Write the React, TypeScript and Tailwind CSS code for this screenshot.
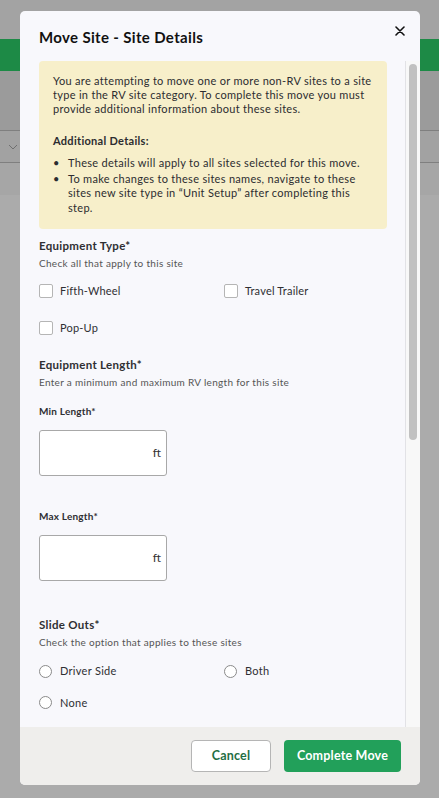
import React from "react";

const font = { fontFamily: "Lato, 'Noto Sans', sans-serif" };

function Checkbox({ label }: { label: string }) {
  return (
    <label className="flex items-center gap-[7px] text-[11px] tracking-[0.2px] text-[#2f2f33]">
      <span className="w-[14px] h-[14px] border border-[#b5b5b5] rounded-[2px] bg-white shrink-0" />
      {label}
    </label>
  );
}

function Radio({ label }: { label: string }) {
  return (
    <label className="flex items-center gap-[8px] text-[11px] tracking-[0.3px] text-[#2f2f33]">
      <span className="w-[13px] h-[13px] border border-[#8a8a8a] rounded-full bg-white shrink-0" />
      {label}
    </label>
  );
}

function LengthInput({ label }: { label: string }) {
  return (
    <div className="flex flex-col">
      <div className="text-[10px] font-bold tracking-[0.2px] text-[#2f2f33] h-[14px] leading-[14px]">{label}</div>
      <div className="mt-[12px] w-[128px] h-[46px] border border-[#a8a8a8] rounded-[3px] bg-white flex items-center justify-end pr-[5px] text-[12px] text-[#333]">
        ft
      </div>
    </div>
  );
}

export default function App() {
  return (
    <div className="relative w-[439px] h-[798px] overflow-hidden bg-[#ababab]" style={font}>
      {/* background page */}
      <div className="flex flex-col">
        <div className="h-[39px] bg-[#a3a3a3]" />
        <div className="h-[32px] bg-[#1d8a46]" />
        <div className="h-[60px] bg-[#9b9b9b] border-b border-[#7f7f7f]" />
        <div className="h-[32px] bg-[#a2a2a2] border-b border-[#7f7f7f] flex items-center pl-[8px]">
          <svg width="10" height="6" viewBox="0 0 10 6" fill="none" stroke="#6f6f6f" strokeWidth="1">
            <path d="M1 1l4 4 4-4" />
          </svg>
        </div>
        <div className="h-[32px] bg-[#a6a6a6]" />
      </div>

      {/* modal */}
      <div className="absolute left-[20px] top-[11px] w-[400px] h-[774px] bg-[#f8f8fc] rounded-[5px] flex flex-col overflow-hidden">
        <div className="h-[50px] shrink-0 flex items-start justify-between pl-[19px] pr-[15px]">
          <h1 className="mt-[16px] text-[15px] font-bold tracking-[0.35px] text-[#111] leading-[20px]">Move Site - Site Details</h1>
          <svg className="mt-[15px]" width="10" height="10" viewBox="0 0 10 10" stroke="#111" strokeWidth="1.6" strokeLinecap="round">
            <path d="M1 1l8 8M9 1l-8 8" />
          </svg>
        </div>

        <div className="flex-1 flex min-h-0">
          <div className="flex-1 overflow-hidden pl-[19px] pr-[18px]">
            <div className="bg-[#f7efca] rounded-[4px] px-[14px] pt-[13px] pb-[14px] text-[11px] tracking-[0.3px] leading-[14px] text-[#2c2c30]">
              <p>
                You are attempting to move one or more non-RV sites to a site type in the RV site category. To complete this move you must provide additional information about these sites.
              </p>
              <p className="mt-[18px] font-bold">Additional Details:</p>
              <ul className="mt-[8px] flex flex-col gap-[1px]">
                <li className="flex leading-[14.5px]">
                  <span className="w-[15px] shrink-0">•</span>
                  <span>These details will apply to all sites selected for this move.</span>
                </li>
                <li className="flex leading-[14.5px]">
                  <span className="w-[15px] shrink-0">•</span>
                  <span>To make changes to these sites names, navigate to these sites new site type in “Unit Setup” after completing this step.</span>
                </li>
              </ul>
            </div>

            <div className="mt-[10px]">
              <div className="text-[11.5px] font-bold tracking-[0.3px] text-[#2f2f33] leading-[14px]">Equipment Type*</div>
              <div className="mt-[4px] text-[10px] tracking-[0.3px] text-[#555] leading-[12px]">Check all that apply to this site</div>
              <div className="mt-[14px] grid grid-cols-[185px_1fr] gap-y-[20px]">
                <Checkbox label="Fifth-Wheel" />
                <Checkbox label="Travel Trailer" />
                <Checkbox label="Pop-Up" />
              </div>
            </div>

            <div className="mt-[22px]">
              <div className="text-[11.5px] font-bold tracking-[0.3px] text-[#2f2f33] leading-[14px]">Equipment Length*</div>
              <div className="mt-[4px] text-[10px] tracking-[0.3px] text-[#555] leading-[12px]">Enter a minimum and maximum RV length for this site</div>
              <div className="mt-[16px] flex flex-col gap-[33px]">
                <LengthInput label="Min Length*" />
                <LengthInput label="Max Length*" />
              </div>
            </div>

            <div className="mt-[37px]">
              <div className="text-[11.5px] font-bold tracking-[0.3px] text-[#2f2f33] leading-[14px]">Slide Outs*</div>
              <div className="mt-[4px] text-[10px] tracking-[0.3px] text-[#555] leading-[12px]">Check the option that applies to these sites</div>
              <div className="mt-[15px] grid grid-cols-[185px_1fr] gap-y-[15px]">
                <Radio label="Driver Side" />
                <Radio label="Both" />
                <Radio label="None" />
              </div>
            </div>
          </div>
          <div className="w-[15px] shrink-0 border-l border-[#e2e2e6] bg-[#f8f8f8] pt-[3px] flex justify-center">
            <div className="w-[8px] h-[376px] rounded-full bg-[#c1c1c1]" />
          </div>
        </div>

        <div className="h-[58px] shrink-0 bg-[#efeeec] flex items-center justify-end gap-[13px] pr-[19px]">
          <button className="w-[80px] h-[32px] rounded-[4px] border border-[#b5b5b5] bg-white text-[12.5px] font-bold tracking-[0.2px] text-[#1f6e43]">
            Cancel
          </button>
          <button className="w-[117px] h-[32px] rounded-[4px] bg-[#22a05a] text-[12.5px] font-bold tracking-[0.2px] text-white">
            Complete Move
          </button>
        </div>
      </div>
    </div>
  );
}
